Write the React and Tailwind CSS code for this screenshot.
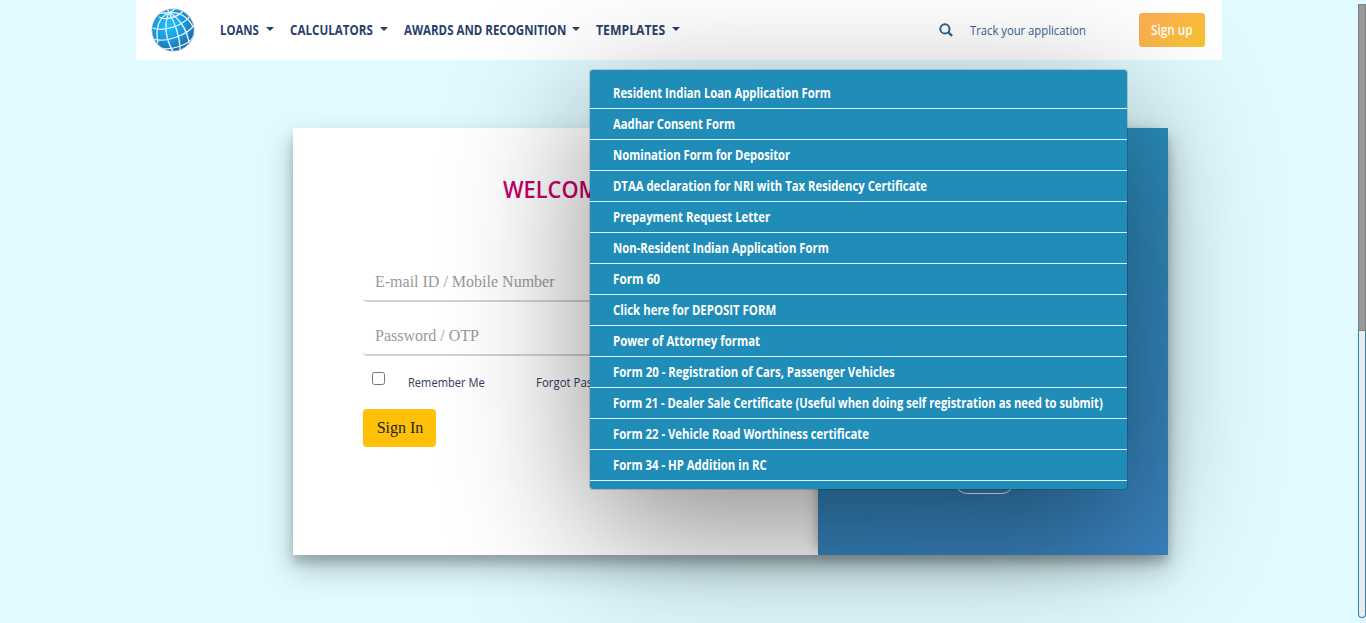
import React, { useLayoutEffect, useRef, useState } from "react";

// Condenses a line of text horizontally to a fixed width.
function Fit({ w, className = "", children }) {
  const ref = useRef(null);
  const [scale, setScale] = useState(1);
  useLayoutEffect(() => {
    setScale(w / ref.current.offsetWidth);
  }, [w]);
  return (
    <span className={`block whitespace-nowrap ${className}`} style={{ width: w }}>
      <span ref={ref} className="inline-block origin-left" style={{ transform: `scaleX(${scale})` }}>
        {children}
      </span>
    </span>
  );
}

const forms = [
  ["Resident Indian Loan Application Form", 218],
  ["Aadhar Consent Form", 122],
  ["Nomination Form for Depositor", 177],
  ["DTAA declaration for NRI with Tax Residency Certificate", 314],
  ["Prepayment Request Letter", 157],
  ["Non-Resident Indian Application Form", 216],
  ["Form 60", 47],
  ["Click here for DEPOSIT FORM", 163],
  ["Power of Attorney format", 147],
  ["Form 20 - Registration of Cars, Passenger Vehicles", 282],
  ["Form 21 - Dealer Sale Certificate (Useful when doing self registration as need to submit)", 490],
  ["Form 22 - Vehicle Road Worthiness certificate", 256],
  ["Form 34 - HP Addition in RC", 154],
];

const nav = [
  ["LOANS", 39],
  ["CALCULATORS", 83],
  ["AWARDS AND RECOGNITION", 162],
  ["TEMPLATES", 69],
];

function Globe() {
  return (
    <svg className="h-[44px] w-[44px]" viewBox="0 0 44 44" fill="none">
      <defs>
        <radialGradient id="globe" cx=".4" cy=".38" r=".68">
          <stop offset="0" stopColor="#22c3f7" />
          <stop offset=".6" stopColor="#1a92d8" />
          <stop offset="1" stopColor="#24609c" />
        </radialGradient>
        <clipPath id="ball"><circle cx="22" cy="22" r="21" /></clipPath>
      </defs>
      <circle cx="22" cy="22" r="21" fill="url(#globe)" stroke="#8fb0c8" strokeWidth=".8" />
      <g clipPath="url(#ball)" stroke="#e5f9ff" strokeWidth="1.3">
        <path d="M8 9C14 13 27 9 32 3M2 20C12 24 32 18 39 8M2 31C14 35 37 27 43 17M8 40C20 43 38 37 43 28" />
        <path d="M18 5C8 9 4 20 7 35M18 5C13 14 14 31 22 43M18 5C23 13 29 28 29 42M18 5C26 8 36 20 38 35M18 5C28 3 37 9 42 19" />
        <path d="M18 5L16 0M18 5L24 1M18 5L9 5" />
      </g>
    </svg>
  );
}

export default function App() {
  return (
    <div className="flex h-[623px] w-full overflow-hidden bg-[#e0faff] font-['Open_Sans',sans-serif]">
      <div className="min-w-0 flex-1">
        <header className="relative ml-[136px] flex h-[60px] w-[1086px] items-center bg-white pl-[15px] text-sm">
          <Globe />
          <nav className="ml-[25px] flex gap-4 font-bold text-[#293f6b]">
            {nav.map(([label, w]) => (
              <div key={label} className="flex items-center">
                <Fit w={w}>{label}</Fit>
                <span className="-mt-[3px] ml-[6.8px] border-x-4 border-t-4 border-x-transparent border-t-[#293f6b]" />
              </div>
            ))}
          </nav>
          <svg className="ml-auto h-[14px] w-[14px]" viewBox="0 0 14 14" fill="none" stroke="#2b6398" strokeWidth="2">
            <circle cx="5.9" cy="5.9" r="4.6" />
            <path d="M9.2 9.2l3.8 3.8" strokeWidth="2.4" />
          </svg>
          <Fit w={116} className="ml-[17px] text-[13px] text-[#3a6194]">Track your application</Fit>
          <button className="mr-[17px] ml-[53px] flex h-[34px] w-[66px] items-center justify-center rounded-[3px] bg-linear-135 from-[#ffac55] to-[#f6c42c] font-semibold text-white">
            <Fit w={42}>Sign up</Fit>
          </button>

          <ul className="absolute top-[69px] left-[453px] z-20 w-[539px] rounded border border-black/15 bg-[#1f8db7] bg-clip-padding py-2 font-bold text-white shadow-[0_42px_138px_rgba(0,0,0,0.45)]">
            {forms.map(([label, w]) => (
              <li key={label} className="flex h-[31px] items-center border-b border-[#d9f7ff] pl-[23px]">
                <Fit w={w}>{label}</Fit>
              </li>
            ))}
          </ul>
        </header>

        <main className="mt-[68px] ml-[293px] flex h-[427px] w-[875px] shadow-[0_14px_28px_rgba(0,0,0,0.22),0_8px_10px_rgba(0,0,0,0.2)]">
          <section className="w-[525px] bg-white px-[70px] pt-[43px] font-['Liberation_Serif',serif] text-base">
            <h1 className="ml-[140px] h-9 font-['Open_Sans',sans-serif] text-[24px] leading-9 font-semibold text-[#c6006b]">
              <Fit w={108}>WELCOME</Fit>
            </h1>
            <div className="mt-[57px] flex h-[38px] items-center rounded border-b-2 border-[#ced4da] px-3 text-[#999]">
              <Fit w={180}>E-mail ID / Mobile Number</Fit>
            </div>
            <div className="mt-4 flex h-[38px] items-center rounded border-b-2 border-[#ced4da] px-3 text-[#999]">
              <Fit w={104}>Password / OTP</Fit>
            </div>
            <div className="flex h-[53px] items-center pl-[8.6px] font-['Open_Sans',sans-serif] text-[13px] text-[#343a60]">
              <input type="checkbox" className="-mt-[9px] h-[13px] w-[13px]" />
              <Fit w={77} className="ml-[23.6px]">Remember Me</Fit>
              <Fit w={94} className="ml-[50.6px]">Forgot Password?</Fit>
            </div>
            <button className="h-[38px] w-[73px] rounded bg-[#ffc107] pl-px text-[#212529]">Sign In</button>
          </section>
          <section className="flex flex-1 items-end justify-center bg-linear-160 from-[#2491bb] to-[#3b82c0] pb-[61px] shadow-[-6px_0_12px_-6px_rgba(0,0,0,0.35)]">
            <button className="mr-[18px] h-[38px] w-[59px] rounded-[12px] border border-white text-sm text-white">Login</button>
          </section>
        </main>
      </div>
      <div className="mt-[4px] h-[614px] w-2 rounded-b-[4px] border-x border-b border-[#2b82b3] bg-[#ececec]">
        <div className="-mx-px h-[327px] border border-[#808080] bg-[#999]" />
      </div>
    </div>
  );
}
